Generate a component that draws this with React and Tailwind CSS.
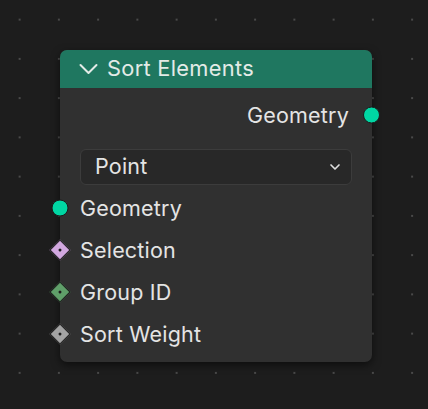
import { ChevronDown } from 'lucide-react'

const inputs = [
  { label: 'Geometry', kind: 'circle', color: 'bg-[#00d6a3]' },
  { label: 'Selection', kind: 'diamond', color: 'bg-[#d2a8e0]' },
  { label: 'Group ID', kind: 'diamond', color: 'bg-[#5f9f69]' },
  { label: 'Sort Weight', kind: 'diamond', color: 'bg-[#a3a3a3]' },
]

function Socket({ kind, color }) {
  if (kind === 'circle') {
    return <div className={`w-[17px] h-[17px] rounded-full border-[1.5px] border-[#1a1a1a] ${color}`} />
  }
  return (
    <div className={`w-[15px] h-[15px] rotate-45 border border-[#1a1a1a] flex items-center justify-center ${color}`}>
      <div className="w-[3.5px] h-[3.5px] rounded-full bg-[#1d1d1d]" />
    </div>
  )
}

export default function App() {
  return (
    <div
      className="w-[428px] h-[409px] bg-[#1d1d1d] bg-[radial-gradient(circle,#4a4a4a_0.8px,transparent_1.4px)] bg-[length:39.25px_39.25px] pt-[50px] pl-[60px]"
      style={{ fontFamily: 'Inter, "Noto Sans", sans-serif' }}
    >
      <div className="w-[312px] h-[312px] rounded-[7px] bg-[#303030] shadow-[0_3px_8px_rgba(0,0,0,0.55)] relative">
        {/* header */}
        <div className="h-[38px] rounded-t-[7px] bg-[#1f7760] flex items-center pl-[19px] gap-[9px] text-[#e3ebe7] text-[21.8px] tracking-[0.3px]">
          <svg width="19" height="12" viewBox="0 0 19 12" fill="none" stroke="currentColor" strokeWidth="2" strokeLinecap="round" strokeLinejoin="round">
            <polyline points="1.5,2 9.5,10 17.5,2" />
          </svg>
          <span className="leading-none pb-[1px]">Sort Elements</span>
        </div>

        <div className="pt-[6px] text-[#e4e4e4] text-[21.5px] tracking-[0.2px]">
          {/* output */}
          <div className="h-[42px] flex items-center justify-end pr-[23px] relative">
            <span>Geometry</span>
            <div className="absolute right-[-8px] top-1/2 -translate-y-1/2">
              <Socket kind="circle" color="bg-[#00d6a3]" />
            </div>
          </div>

          {/* dropdown */}
          <div className="mx-[20px] mt-[13px] h-[36px] rounded-[6px] bg-[#282828] border border-[#3c3c3c] flex items-center justify-between pl-[14px] pr-[8px]">
            <span className="text-[#e4e4e4] pb-[1px]">Point</span>
            <ChevronDown className="w-[16px] h-[16px] text-[#e0e0e0]" strokeWidth={2.5} />
          </div>

          {/* inputs */}
          <div className="mt-[2px]">
            {inputs.map((s) => (
              <div key={s.label} className="h-[42px] flex items-center pl-[20px] relative">
                <div className="absolute left-0 top-1/2 -translate-x-1/2 -translate-y-1/2 flex items-center justify-center">
                  <Socket kind={s.kind} color={s.color} />
                </div>
                <span>{s.label}</span>
              </div>
            ))}
          </div>
        </div>
      </div>
    </div>
  )
}
